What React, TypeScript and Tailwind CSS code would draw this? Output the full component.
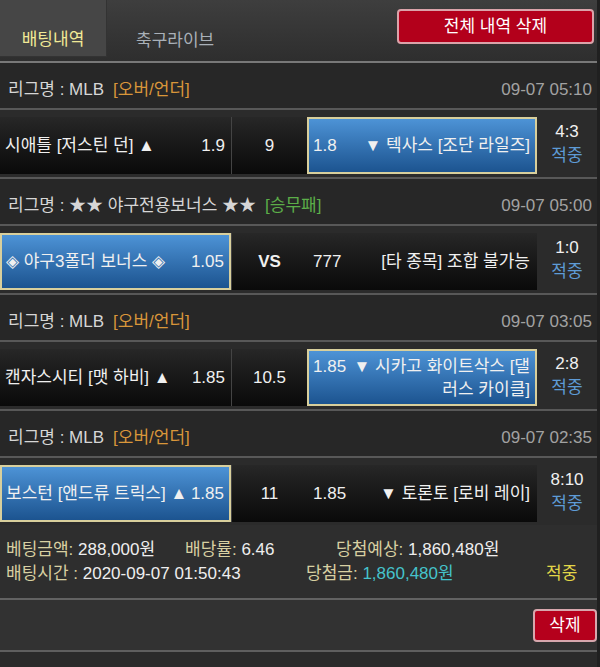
import React from "react";

const FONT =
  "font-['Liberation_Sans','Noto_Sans_CJK_KR',sans-serif] [font-feature-settings:'palt']";

function League({
  name,
  tag,
  tagClass,
  date,
}: {
  name: string;
  tag: string;
  tagClass: string;
  date: string;
}) {
  return (
    <div className="flex h-[47px] items-center justify-between border-b-2 border-[#585858] bg-[#272727] pl-[8px] pr-[5px] pt-[8px]">
      <div className="text-[17px] text-[#d6d6d6]">
        {name}
        <span className={"ml-[9px] " + tagClass}>{tag}</span>
      </div>
      <div className="text-[17px] text-[#a2a2a2]">{date}</div>
    </div>
  );
}

function Cell({
  blue,
  className,
  children,
}: {
  blue?: boolean;
  className: string;
  children: React.ReactNode;
}) {
  const base = blue
    ? "border-2 border-[#d8cf9c] bg-gradient-to-b from-[#4d93d6] to-[#1c5490]"
    : "bg-gradient-to-b from-[#272727] to-[#0a0a0a]";
  return (
    <div
      className={
        "mt-[7px] mb-[3px] flex items-center text-[17px] text-[#f0f0f0] " +
        base +
        " " +
        className
      }
    >
      {children}
    </div>
  );
}

function Score({ score }: { score: string }) {
  return (
    <div className="flex w-[60px] flex-col items-center justify-center leading-[24px]">
      <div className="text-[17px] text-[#f0f0f0]">{score}</div>
      <div className="text-[17px] text-[#5e9bd6]">적중</div>
    </div>
  );
}

function BetRow({ children }: { children: React.ReactNode }) {
  return (
    <div className="flex h-[69px] border-b-2 border-[#585858] bg-[#2b2b2b]">
      {children}
    </div>
  );
}

export default function App() {
  return (
    <div className={"min-h-[667px] bg-[#202020] " + FONT}>
      <div className="h-[667px] w-[597px] overflow-hidden bg-[#2a2a2a]">
        {/* Header */}
        <div className="flex h-[63px] items-start border-b-2 border-[#787878] bg-gradient-to-b from-[#3e3e3e] to-[#2e2e2e]">
          <div className="flex h-[57px] w-[107px] items-end justify-center border-r border-b border-[#333] bg-[#464646] pb-[4px] text-[17px] leading-[24px] text-[#f1e996]">
            배팅내역
          </div>
          <div className="ml-[29px] flex h-[57px] items-end pb-[4px] text-[17px] leading-[24px] text-[#a9b0b8]">
            축구라이브
          </div>
          <div className="ml-auto mr-[3px] mt-[9px] flex h-[35px] w-[197px] items-center justify-center rounded-[4px] border-2 border-[#dba3aa] bg-[#b3001b] text-[17px] text-white">
            전체 내역 삭제
          </div>
        </div>

        {/* Game 1 */}
        <League
          name="리그명 : MLB"
          tag="[오버/언더]"
          tagClass="text-[#d9963a]"
          date="09-07 05:10"
        />
        <BetRow>
          <Cell className="w-[231px] justify-between pl-[5px] pr-[6px]">
            <span>시애틀 [저스틴 던] ▲</span>
            <span>1.9</span>
          </Cell>
          <Cell className="w-[76px] justify-center border-l border-[#444]">
            <span>9</span>
          </Cell>
          <Cell blue className="w-[230px] justify-between pl-[4px] pr-[5px]">
            <span>1.8</span>
            <span>▼ 텍사스 [조단 라일즈]</span>
          </Cell>
          <Score score="4:3" />
        </BetRow>

        {/* Game 2 */}
        <League
          name="리그명 : ★★ 야구전용보너스 ★★"
          tag="[승무패]"
          tagClass="text-[#5cae49]"
          date="09-07 05:00"
        />
        <BetRow>
          <Cell blue className="w-[231px] justify-between pl-[4px] pr-[5px]">
            <span>◈ 야구3폴더 보너스 ◈</span>
            <span>1.05</span>
          </Cell>
          <Cell className="w-[76px] justify-center border-l border-[#444]">
            <span className="font-bold">VS</span>
          </Cell>
          <Cell className="w-[230px] justify-between pl-[6px] pr-[7px]">
            <span>777</span>
            <span>[타 종목] 조합 불가능</span>
          </Cell>
          <Score score="1:0" />
        </BetRow>

        {/* Game 3 */}
        <League
          name="리그명 : MLB"
          tag="[오버/언더]"
          tagClass="text-[#d9963a]"
          date="09-07 03:05"
        />
        <BetRow>
          <Cell className="w-[231px] justify-between pl-[5px] pr-[6px]">
            <span>캔자스시티 [맷 하비] ▲</span>
            <span>1.85</span>
          </Cell>
          <Cell className="w-[76px] justify-center border-l border-[#444]">
            <span>10.5</span>
          </Cell>
          <Cell blue className="w-[230px] flex-col !items-stretch justify-center pl-[4px] pr-[5px] leading-[23px]">
            <div className="flex justify-between whitespace-nowrap">
              <span>1.85</span>
              <span>▼ 시카고 화이트삭스 [댈</span>
            </div>
            <div className="text-right">러스 카이클]</div>
          </Cell>
          <Score score="2:8" />
        </BetRow>

        {/* Game 4 */}
        <League
          name="리그명 : MLB"
          tag="[오버/언더]"
          tagClass="text-[#d9963a]"
          date="09-07 02:35"
        />
        <div className="flex h-[67px] bg-[#2b2b2b]">
          <Cell blue className="w-[231px] justify-between pl-[4px] pr-[5px]">
            <span>보스턴 [앤드류 트릭스] ▲</span>
            <span>1.85</span>
          </Cell>
          <Cell className="w-[76px] justify-center border-l border-[#444]">
            <span>11</span>
          </Cell>
          <Cell className="w-[230px] justify-between pl-[6px] pr-[7px]">
            <span>1.85</span>
            <span>▼ 토론토 [로비 레이]</span>
          </Cell>
          <Score score="8:10" />
        </div>

        {/* Summary */}
        <div className="h-[75px] border-b-2 border-[#626262] bg-[#2e2e2e] pl-[6px] pt-[13px] text-[17px] leading-[24px]">
          <div className="flex">
            <span className="w-[179px]">
              <span className="text-[#d8d0a2]">베팅금액: </span>
              <span className="text-[#eeeeee]">288,000원</span>
            </span>
            <span className="w-[151px]">
              <span className="text-[#d8d0a2]">배당률: </span>
              <span className="text-[#eeeeee]">6.46</span>
            </span>
            <span>
              <span className="text-[#d8d0a2]">당첨예상: </span>
              <span className="text-[#eeeeee]">1,860,480원</span>
            </span>
          </div>
          <div className="flex">
            <span className="w-[300px]">
              <span className="text-[#d8d0a2]">배팅시간 : </span>
              <span className="text-[#eeeeee]">2020-09-07 01:50:43</span>
            </span>
            <span className="w-[240px]">
              <span className="text-[#d8d0a2]">당첨금: </span>
              <span className="text-[#45c3cb]">1,860,480원</span>
            </span>
            <span className="text-[#e2d648]">적중</span>
          </div>
        </div>

        {/* Delete button row */}
        <div className="flex h-[52px] items-start justify-end border-b-2 border-[#5e5e5e] bg-[#323232] pt-[9px]">
          <div className="flex h-[33px] w-[64px] items-center justify-center rounded-[4px] border-2 border-[#d7a7ad] bg-[#b5001c] text-[17px] text-white">
            삭제
          </div>
        </div>
        <div className="h-[20px] bg-[#2a2a2a]" />
      </div>
    </div>
  );
}
